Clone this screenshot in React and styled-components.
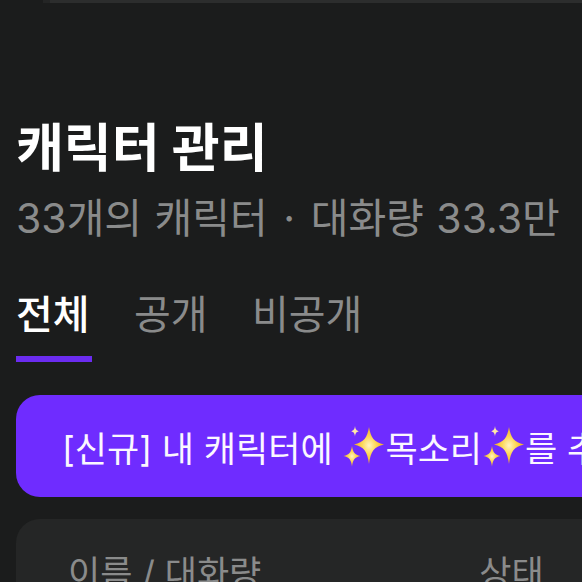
import React from "react";
import styled, { createGlobalStyle } from "styled-components";

const GlobalStyle = createGlobalStyle`
  html, body {
    margin: 0;
    padding: 0;
    width: 582px;
    height: 582px;
    overflow: hidden;
    background: #1b1c1c;
  }
  * {
    box-sizing: border-box;
  }
`;

function Sparkles() {
  return (
    <SparkleIcon viewBox="0 0 41 44">
      <defs>
        <radialGradient id="spark">
          <stop offset="0" stopColor="#fff3c4" />
          <stop offset="0.45" stopColor="#fdd85a" />
          <stop offset="1" stopColor="#f5ac1c" />
        </radialGradient>
      </defs>
      <path
        d="M26 3c1.800 11 5 15 15 17.500-10 2.500-13.200 6.500-15 19.500-1.800-13-5-17-15-19.500 10-2.500 13.200-6.500 15-17.500z"
        fill="url(#spark)"
      />
      <path
        d="M9 22c1 6.500 2.700 8.700 8.500 10-5.800 1.300-7.500 3.500-8.500 10.500-1-7-2.700-9.200-8.500-10.500 5.800-1.300 7.500-3.500 8.500-10z"
        fill="url(#spark)"
      />
      <path
        d="M12 2c.5 3.400 1.300 4.500 4 5.200-2.700.7-3.500 1.800-4 5.300-.5-3.500-1.300-4.600-4-5.300 2.700-.7 3.500-1.800 4-5.200z"
        fill="#ffe9a8"
      />
    </SparkleIcon>
  );
}

export default function App() {
  return (
    <Page>
      <GlobalStyle />
      <TopBar>
        <TopBarFill />
      </TopBar>
      <Title>캐릭터 관리</Title>
      <Summary>
        33개의 캐릭터 <Dot>·</Dot> 대화량 33.3만
      </Summary>
      <Tabs>
        <Tab $active>전체</Tab>
        <Tab>공개</Tab>
        <Tab>비공개</Tab>
      </Tabs>
      <Banner>
        [신규] 내 캐릭터에 <Sparkles />목소리<Sparkles />를 추가해보세요
      </Banner>
      <TableCard>
        <TableHead>
          <span>이름 / 대화량</span>
          <span>상태</span>
        </TableHead>
      </TableCard>
    </Page>
  );
}

const Page = styled.div`
  width: 582px;
  height: 582px;
  overflow: hidden;
  padding: 0 0 0 16px;
  font-family: Inter, "Noto Sans CJK KR", sans-serif;
  background: #1b1c1c;
`;

const TopBar = styled.div`
  height: 3px;
  margin-left: 27px;
  padding-left: 7px;
  background: #242525;
`;

const TopBarFill = styled.div`
  height: 100%;
  background: #2c2d2d;
`;

const Title = styled.h1`
  margin: 112px 0 0;
  font-size: 52px;
  line-height: 68px;
  font-weight: 700;
  color: #ffffff;
`;

const Summary = styled.div`
  margin-top: 7px;
  font-size: 41px;
  line-height: 56px;
  font-weight: 400;
  word-spacing: 1px;
  color: #8a8b8b;
  white-space: nowrap;
`;

const Dot = styled.span`
  margin: 0 3px;
`;

const Tabs = styled.div`
  display: flex;
  gap: 42px;
  margin-top: 41px;
`;

const Tab = styled.div`
  height: 75px;
  min-width: 76px;
  font-size: 40px;
  line-height: 56px;
  font-weight: ${(p) => (p.$active ? 500 : 400)};
  color: ${(p) => (p.$active ? "#ffffff" : "#8a8b8b")};
  border-bottom: 6px solid ${(p) => (p.$active ? "#6b2cf0" : "transparent")};
`;

const Banner = styled.div`
  display: flex;
  align-items: center;
  height: 102px;
  width: 640px;
  margin-top: 33px;
  padding-left: 46px;
  border-radius: 24px;
  background: #6f2cff;
  color: #fbf7ff;
  font-size: 35px;
  white-space: pre;
`;

const SparkleIcon = styled.svg`
  width: 43px;
  height: 44px;
  flex: none;
`;

const TableCard = styled.div`
  width: 640px;
  height: 140px;
  margin-top: 22px;
  border-radius: 24px;
  background: #252626;
`;

const TableHead = styled.div`
  display: flex;
  gap: 218px;
  padding: 30px 0 0 52px;
  font-size: 35px;
  line-height: 48px;
  color: #8a8b8b;
`;
